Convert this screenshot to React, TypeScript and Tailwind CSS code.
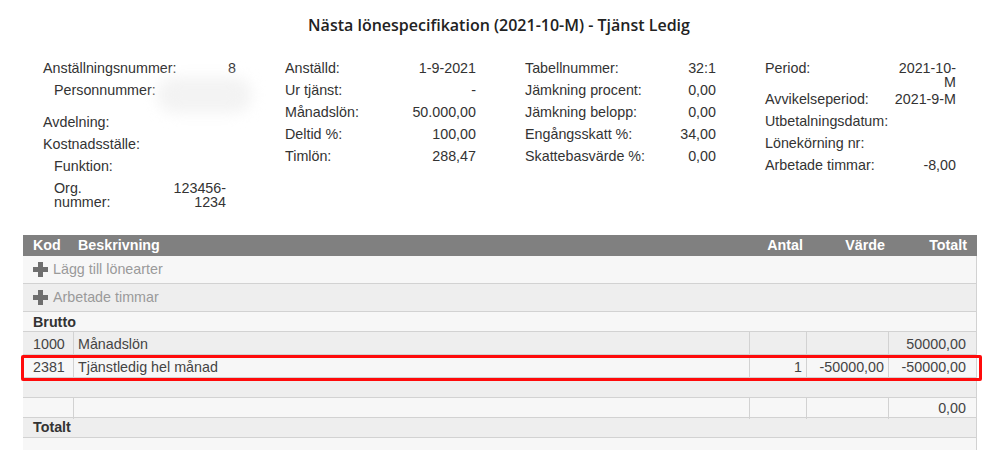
import React from "react";

type Row = { label: React.ReactNode; value?: React.ReactNode; h?: string; lw?: string; vw?: string };

function InfoRow({ label, value, h = "h-[22px]", lw = "", vw = "" }: Row) {
  return (
    <div className={`flex justify-between pt-[4px] leading-[14px] ${h}`}>
      <div className={lw}>{label}</div>
      <div className={`text-right ${vw}`}>{value}</div>
    </div>
  );
}

function Plus() {
  return (
    <svg width="15" height="15" viewBox="0 0 15 15" className="shrink-0">
      <rect x="5" y="0" width="5" height="15" fill="#6f6f6f" />
      <rect x="0" y="5" width="15" height="5" fill="#6f6f6f" />
    </svg>
  );
}

const grid = "grid grid-cols-[51px_676px_57px_82px_88px]";
const cell = "flex items-center pt-[2px] border-r border-[#d2d2d2]";
const cell0 = "flex items-center border-r border-[#d2d2d2]";

export default function App() {
  return (
    <div className="w-[998px] h-[450px] overflow-hidden bg-white text-[14.3px] text-[#333] font-['Liberation_Sans',Arial,sans-serif]">
      <div className="pt-[14px] h-[57px] text-center text-[16px] leading-[22px] font-semibold text-[#222] font-['Open_Sans','Noto_Sans',sans-serif]">
        Nästa lönespecifikation (2021-10-M) - Tjänst Ledig
      </div>

      <div className="h-[178px] pl-[43px] flex gap-[49px]">
        <div className="w-[193px]">
          <InfoRow label="Anställningsnummer:" value="8" />
          <div className="pl-[11px] pr-[10px]">
            <div className="flex justify-between pt-[4px] leading-[14px] h-[32px]">
              <div>Personnummer:</div>
              <div className="w-[95px] h-[36px] -mr-[26px] -mt-[6px] rounded-full bg-[#f3f3f3] blur-[7px]" />
            </div>
          </div>
          <InfoRow label="Avdelning:" />
          <InfoRow label="Kostnadsställe:" />
          <div className="pl-[11px] pr-[10px]">
            <InfoRow label="Funktion:" />
            <InfoRow h="h-[36px]" lw="w-[70px]" vw="w-[60px]" label="Org. nummer:" value="123456-1234" />
          </div>
        </div>

        <div className="w-[191px]">
          <InfoRow label="Anställd:" value="1-9-2021" />
          <InfoRow label="Ur tjänst:" value="-" />
          <InfoRow label="Månadslön:" value="50.000,00" />
          <InfoRow label="Deltid %:" value="100,00" />
          <InfoRow label="Timlön:" value="288,47" />
        </div>

        <div className="w-[191px]">
          <InfoRow label="Tabellnummer:" value="32:1" />
          <InfoRow label="Jämkning procent:" value="0,00" />
          <InfoRow label="Jämkning belopp:" value="0,00" />
          <InfoRow label="Engångsskatt %:" value="34,00" />
          <InfoRow label="Skattebasvärde %:" value="0,00" />
        </div>

        <div className="w-[191px]">
          <InfoRow h="h-[31px]" vw="w-[62px]" label="Period:" value="2021-10-M" />
          <InfoRow label="Avvikelseperiod:" value="2021-9-M" />
          <InfoRow label="Utbetalningsdatum:" />
          <InfoRow label="Lönekörning nr:" />
          <InfoRow label="Arbetade timmar:" value="-8,00" />
        </div>
      </div>

      <div className="ml-[23px] w-[954px] text-[#444]">
        <div className={`${grid} h-[21px] items-center bg-[#808080] text-white font-bold`}>
          <div className="pl-[10px]">Kod</div>
          <div className="pl-[4px]">Beskrivning</div>
          <div className="text-right pr-[4px]">Antal</div>
          <div className="text-right pr-[4px]">Värde</div>
          <div className="text-right pr-[10px]">Totalt</div>
        </div>

        <div className="h-[28px] flex items-center gap-[5px] pl-[10px] bg-[#f7f7f7] border-b border-r border-[#d2d2d2] text-[#9a9a9a]">
          <Plus />
          <span>Lägg till lönearter</span>
        </div>
        <div className="h-[28px] flex items-center gap-[5px] pl-[10px] bg-[#eeeeee] border-b border-r border-[#d2d2d2] text-[#9a9a9a]">
          <Plus />
          <span>Arbetade timmar</span>
        </div>
        <div className="h-[20px] flex items-center pt-[2px] pl-[10px] bg-[#f7f7f7] border-b border-r border-[#d2d2d2] font-bold text-[#333]">
          Brutto
        </div>

        <div className={`${grid} h-[23px] bg-[#eeeeee] border-b border-[#d2d2d2]`}>
          <div className={`${cell} pl-[10px]`}>1000</div>
          <div className={`${cell} pl-[4px]`}>Månadslön</div>
          <div className={cell} />
          <div className={cell} />
          <div className={`${cell} justify-end pr-[10px]`}>50000,00</div>
        </div>

        <div className="relative">
          <div className={`${grid} h-[23px] bg-[#f7f7f7] border-b border-[#d2d2d2]`}>
            <div className={`${cell} pl-[10px]`}>2381</div>
            <div className={`${cell} pl-[4px]`}>Tjänstledig hel månad</div>
            <div className={`${cell} justify-end pr-[4px]`}>1</div>
            <div className={`${cell} justify-end pr-[4px]`}>-50000,00</div>
            <div className={`${cell} justify-end pr-[10px]`}>-50000,00</div>
          </div>
          <div className="absolute top-[0px] -left-[2px] -right-[5px] -bottom-[3px] border-[3px] border-[#ff0b0b] rounded-[2px] pointer-events-none" />
        </div>

        <div className="h-[20px] bg-[#eeeeee] border-b border-r border-[#d2d2d2]" />

        <div className={`${grid} h-[20px] bg-[#f7f7f7] border-b border-[#d2d2d2]`}>
          <div className={cell0} />
          <div className={cell0} />
          <div className={cell0} />
          <div className={cell0} />
          <div className={`${cell0} justify-end pr-[10px]`}>0,00</div>
        </div>

        <div className="h-[20px] flex items-center pl-[10px] bg-[#eeeeee] border-b border-r border-[#d2d2d2] font-bold text-[#333]">
          Totalt
        </div>
        <div className="h-[20px] bg-[#f7f7f7] border-r border-[#d2d2d2]" />
      </div>
    </div>
  );
}
